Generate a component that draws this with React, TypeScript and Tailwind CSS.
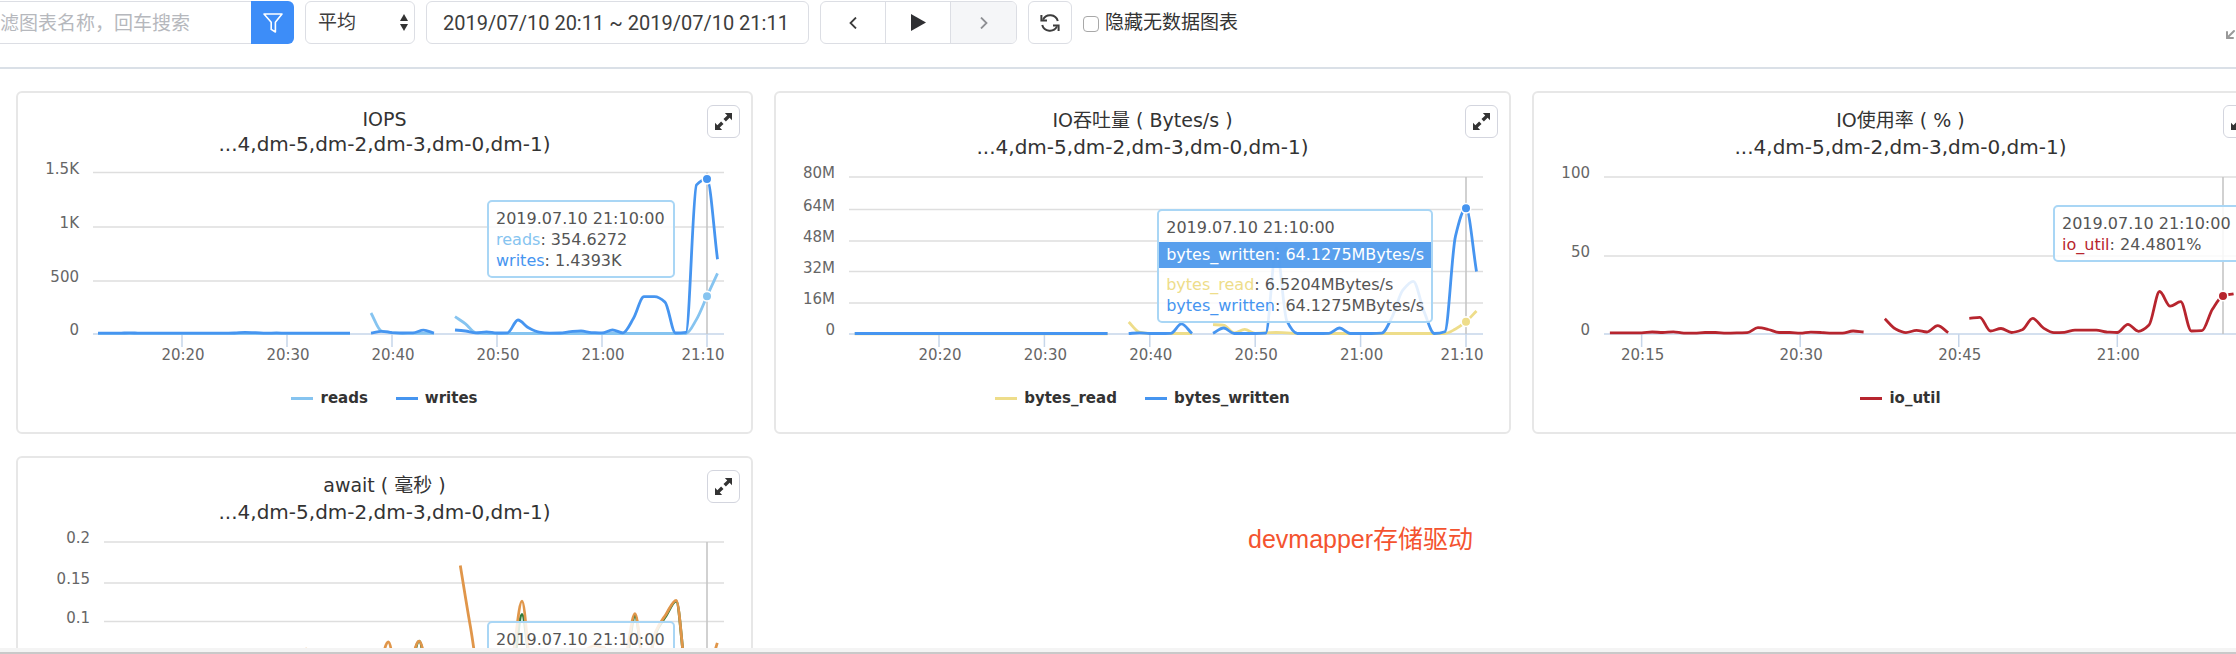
import React from "react";
import { Maximize2 } from "lucide-react";

type Point = [number, number];

interface Series {
  name?: string;
  color: string;
  runs: Point[][];
}

interface Tick {
  label: string;
  y: number;
}

interface ChartProps {
  top: number;
  left: number;
  right: number;
  yTicks: Tick[];
  xTicks: string[];
  max: number;
  originX: number;
  step: number;
  series: Series[];
}

const AXIS_Y = 241;

/* Flat stretch of samples, one per minute. */
const flat = (from: number, to: number, value: number): Point[] =>
  Array.from({ length: to - from + 1 }, (_, i) => [from + i, value] as Point);

/* Monotone cubic path through the points. */
function smooth(points: Point[]): string {
  const n = points.length;
  if (n < 2) return "";
  const slopes = points.slice(1).map((p, i) => (p[1] - points[i][1]) / (p[0] - points[i][0]));
  const tangents = points.map((_, i) => {
    if (i === 0) return slopes[0];
    if (i === n - 1) return slopes[n - 2];
    const a = slopes[i - 1];
    const b = slopes[i];
    return a * b <= 0 ? 0 : (2 * a * b) / (a + b);
  });
  let d = `M${points[0][0].toFixed(1)} ${points[0][1].toFixed(1)}`;
  for (let i = 0; i < n - 1; i++) {
    const [x0, y0] = points[i];
    const [x1, y1] = points[i + 1];
    const h = (x1 - x0) / 3;
    d += `C${(x0 + h).toFixed(1)} ${(y0 + tangents[i] * h).toFixed(1)} ${(x1 - h).toFixed(1)} ${(y1 - tangents[i + 1] * h).toFixed(1)} ${x1.toFixed(1)} ${y1.toFixed(1)}`;
  }
  return d;
}

const toMinute = (label: string) => {
  const [h, m] = label.split(":").map(Number);
  return (h - 20) * 60 + m;
};

function Chart({ top, left, right, yTicks, xTicks, max, originX, step, series }: ChartProps) {
  const plotTop = yTicks[0].y;
  const px = (t: number) => originX + (t - 20) * step;
  const py = (v: number) => AXIS_Y + 0.5 - (v / max) * (AXIS_Y + 0.5 - plotTop);
  return (
    <svg viewBox={`0 ${top} 733 ${278 - top}`} className="block w-full font-['DejaVu_Sans','Noto_Sans_CJK_SC',sans-serif] text-[15px]">
      {yTicks.map((t) => (
        <g key={t.label}>
          <line x1={left} x2={right} y1={t.y} y2={t.y} stroke={t.y === AXIS_Y ? "#c6d6ea" : "#dedede"} strokeWidth={t.y === AXIS_Y ? 1.5 : 1.6} />
          <text x={left - 14} y={t.y + 1} textAnchor="end" fill="#666">
            {t.label}
          </text>
        </g>
      ))}
      {xTicks.map((label) => {
        const x = px(toMinute(label));
        return (
          <g key={label}>
            <line x1={x} x2={x} y1={AXIS_Y} y2={AXIS_Y + 13} stroke="#c6d6ea" strokeWidth={1.5} />
            <text x={Math.min(x + 1, right - 21)} y={267} textAnchor="middle" fill="#666">
              {label}
            </text>
          </g>
        );
      })}
      <line x1={px(70)} x2={px(70)} y1={plotTop} y2={AXIS_Y} stroke="#c6c6c6" strokeWidth={1.6} />
      {series.map((s) =>
        s.runs.map((run, i) => (
          <path
            key={s.color + i}
            d={smooth(run.map(([t, v]) => [px(t), py(v)] as Point))}
            fill="none"
            stroke={s.color}
            strokeWidth={2.8}
            strokeLinejoin="round"
          />
        )),
      )}
      {series.map((s) => {
        const last = s.runs[s.runs.length - 1].find((p) => p[0] === 70);
        return last ? <circle key={s.color} cx={px(70)} cy={py(last[1])} r={4.8} fill={s.color} stroke="#fff" strokeWidth={1.6} /> : null;
      })}
    </svg>
  );
}

function ExpandButton() {
  return (
    <button
      type="button"
      aria-label="放大"
      className="absolute right-[11px] top-3 flex size-[33px] items-center justify-center rounded-md border-[1.5px] border-[#d3d5de] bg-white"
    >
      <svg viewBox="0 0 50 50" className="size-[17px]" fill="#333">
        <path d="M29 0H50V21L43 14L32 25L25 18L36 7Z" />
        <path d="M21 50H0V29L7 36L18 25L25 32L14 43Z" />
      </svg>
    </button>
  );
}

function Tooltip({ className, children }: { className: string; children?: React.ReactNode }) {
  return (
    <div
      className={`absolute min-w-[188px] whitespace-nowrap rounded-[5px] border-2 border-[#a9d6f5] bg-white/85 pt-1.5 pb-[5px] text-base leading-[21px] text-[#555] ${className}`}
    >
      <div className="px-[7px]">2019.07.10 21:10:00</div>
      {children}
    </div>
  );
}

function Row({ name, color, value }: { name: string; color: string; value: string }) {
  return (
    <div className="px-[7px]">
      <span className={color}>{name}</span>: {value}
    </div>
  );
}

interface CardProps {
  title: string;
  compact?: boolean;
  chart: Omit<ChartProps, "top">;
  children: React.ReactNode;
}

function Card({ title, compact, chart, children }: CardProps) {
  return (
    <section className="relative rounded-md border-2 border-[#e7e7e7] bg-white pt-3.5 pb-[22px]">
      <h2 className={`text-center text-[#333] ${compact ? "leading-[25px]" : "leading-[27px]"}`}>
        <span className="block text-[19px]/[inherit]">{title}</span>
        <span className="block text-xl/[inherit]">...4,dm-5,dm-2,dm-3,dm-0,dm-1)</span>
      </h2>
      <ExpandButton />
      <Chart top={compact ? 64 : 68} {...chart} />
      <ul className="mt-[15px] flex h-6 justify-center gap-7 text-[15px] leading-6 font-bold text-[#333]">
        {chart.series
          .filter((s) => s.name)
          .map((s) => (
            <li key={s.color} className="flex items-center gap-[7px]">
              <span className="h-[3px] w-[22px]" style={{ backgroundColor: s.color }} />
              {s.name}
            </li>
          ))}
      </ul>
      {children}
    </section>
  );
}

const tenMinutes = ["20:20", "20:30", "20:40", "20:50", "21:00", "21:10"];

const iops: Omit<ChartProps, "top"> = {
  left: 75,
  right: 706,
  max: 1500,
  originX: 164,
  step: 10.5,
  xTicks: tenMinutes,
  yTicks: [
    { label: "1.5K", y: 79.5 },
    { label: "1K", y: 134 },
    { label: "500", y: 188 },
    { label: "0", y: AXIS_Y },
  ],
  series: [
    {
      name: "reads",
      color: "#86c4f0",
      runs: [
        flat(12, 36, 8),
        [[38, 199], [39, 32], [40, 18], ...flat(41, 44, 10)],
        [[46, 165], [47, 98], [48, 15], ...flat(49, 68, 9), [69, 140], [70, 354.6], [71, 567]],
      ],
    },
    {
      name: "writes",
      color: "#4695f0",
      runs: [
        [...flat(12, 14, 12), [15, 16], ...flat(16, 24, 12), [25, 14], [26, 19], [27, 17], [28, 12], [29, 15], ...flat(30, 36, 12)],
        [[38, 12], [39, 30], [40, 18], [41, 14], [42, 15], [43, 40], [44, 14]],
        [
          [46, 42], [47, 32], [48, 15], [49, 24], [50, 14], [51, 16], [52, 134], [53, 62], [54, 22], [55, 13], [56, 14], [57, 27], [58, 33],
          [59, 18], [60, 15], [61, 42], [62, 16], [63, 150], [64, 350], [65, 350], [66, 300], [67, 14], [68, 20], [69, 1385], [70, 1439.3], [71, 697],
        ],
      ],
    },
  ],
};

const throughput: Omit<ChartProps, "top"> = {
  left: 73,
  right: 707,
  max: 80,
  originX: 163,
  step: 10.54,
  xTicks: tenMinutes,
  yTicks: [
    { label: "80M", y: 84 },
    { label: "64M", y: 116.5 },
    { label: "48M", y: 148 },
    { label: "32M", y: 178.5 },
    { label: "16M", y: 210 },
    { label: "0", y: AXIS_Y },
  ],
  series: [
    {
      name: "bytes_read",
      color: "#eedd8a",
      runs: [
        flat(12, 36, 0.3),
        [[38, 6.3], [39, 1.2], ...flat(40, 44, 0.5)],
        [[46, 5], [47, 4.8], [48, 0.8], [49, 2.6], [50, 0.6], [51, 0.8], [52, 1], [53, 0.8], ...flat(54, 68, 0.5), [69, 2.8], [70, 6.52], [71, 12]],
      ],
    },
    {
      name: "bytes_written",
      color: "#4695f0",
      runs: [
        flat(12, 36, 0.5),
        [[38, 0.5], [39, 0.8], [40, 0.5], [41, 0.5], [42, 0.6], [43, 5.4], [44, 0.5]],
        [
          [46, 0.6], [47, 3.3], [48, 0.5], ...flat(49, 50, 0.5), [51, 0.7], [52, 44], [53, 7], ...flat(54, 56, 0.5), [57, 0.6], [58, 3.3], [59, 0.5],
          ...flat(60, 61, 0.5), [62, 0.7], [63, 9], [64, 22.5], [65, 27], [66, 12], [67, 0.5], [68, 1.4], [69, 50], [70, 64.13], [71, 32],
        ],
      ],
    },
  ],
};

const util: Omit<ChartProps, "top"> = {
  left: 70,
  right: 707,
  max: 100,
  originX: 160.5,
  step: 10.57,
  xTicks: ["20:15", "20:30", "20:45", "21:00"],
  yTicks: [
    { label: "100", y: 84 },
    { label: "50", y: 163 },
    { label: "0", y: AXIS_Y },
  ],
  series: [
    {
      name: "io_util",
      color: "#b7252e",
      runs: [
        [
          ...flat(12, 15, 1), [16, 1.6], [17, 1.3], [18, 1.7], [19, 0.9], [20, 0.9], [21, 1.3], [22, 1.3], [23, 0.9], [24, 1], [25, 1.2], [26, 4.3],
          [27, 3.2], [28, 1.3], [29, 1.3], [30, 0.8], [31, 1.5], [32, 1.3], [33, 0.9], [34, 0.9], [35, 2.2], [36, 1.6],
        ],
        [[38, 10], [39, 3.6], [40, 1.2], [41, 2.6], [42, 1.6], [43, 5.6], [44, 1.2]],
        [
          [46, 10.3], [47, 10.9], [48, 2.2], [49, 3.8], [50, 1.3], [51, 3], [52, 10.3], [53, 4.2], [54, 1.2], [55, 1.4], [56, 2.8], [57, 2.8],
          [58, 2.8], [59, 1.6], [60, 1.3], [61, 6.4], [62, 2], [63, 6], [64, 27.3], [65, 18], [66, 20.8], [67, 2.2], [68, 2.4], [69, 16], [70, 24.48], [71, 25.8],
        ],
      ],
    },
  ],
};

const awaitTime: Omit<ChartProps, "top"> = {
  left: 86,
  right: 706,
  max: 0.2,
  originX: 175,
  step: 10.28,
  xTicks: [],
  yTicks: [
    { label: "0.2", y: 84 },
    { label: "0.15", y: 125 },
    { label: "0.1", y: 163.5 },
  ],
  series: [
    {
      color: "#2c7a3c",
      runs: [
        [[38, 0.01], [39, 0.03], [40, 0.01], [41, 0.03], [42, 0.074], [43, 0.02], [44, 0.02]],
        [[48, 0.02], [51, 0.03], [52, 0.108], [53, 0.03], [55, 0.02], [62, 0.04], [63, 0.106], [64, 0.03], [65, 0.084], [66, 0.106], [67, 0.125], [68, 0.03], [69, 0.01]],
      ],
    },
    {
      color: "#e0964a",
      runs: [
        [[29, 0.01], [30, 0.03], [31, 0.064], [32, 0.03], [33, 0.01]],
        [[38, 0.03], [39, 0.073], [40, 0.02], [41, 0.04], [42, 0.074], [43, 0.03], [44, 0.02]],
        [
          [46, 0.17], [47, 0.091], [48, 0.02], [49, 0.01], [51, 0.05], [52, 0.125], [53, 0.03], [55, 0.02], [57, 0.03], [58, 0.06], [59, 0.068],
          [60, 0.066], [61, 0.03], [62, 0.05], [63, 0.109], [64, 0.03], [65, 0.086], [66, 0.108], [67, 0.126], [68, 0.03], [69, 0.01], [70, 0.03], [71, 0.072],
        ],
      ],
    },
  ],
};

const control = "h-[43px] border-[1.5px] border-[#dcdee4] bg-white text-[#3d3d3d]";

function Toolbar() {
  return (
    <header className="shrink-0 border-b-2 border-[#dae0e7] pt-px pb-[23px] font-[Roboto,'Noto_Sans_CJK_SC',sans-serif] text-[19px]">
      <div className="-mr-3 -ml-9 flex items-center">
        <form className="flex" onSubmit={(e) => e.preventDefault()}>
          <input
            type="text"
            aria-label="过滤图表"
            placeholder="过滤图表名称，回车搜索"
            className={`${control} w-[287px] rounded-l-md border-r-0 pt-0.5 pl-4 placeholder:text-[#b6b8bd]`}
          />
          <button type="submit" aria-label="过滤" className="flex h-[43px] w-[43px] items-center justify-center rounded-r-md bg-[#3d8df8]">
            <svg viewBox="0 0 20 20" className="size-5" fill="none" stroke="#fff" strokeWidth={1.6} strokeLinejoin="round">
              <path d="M1 1H19L12.4 9.2V19L8.2 16.4V9.2Z" />
            </svg>
          </button>
        </form>
        <div className="relative ml-[11px]">
          <select aria-label="聚合方式" className={`${control} w-[110px] appearance-none rounded-md pt-0.5 pl-3`}>
            <option>平均</option>
          </select>
          <svg viewBox="0 0 8 17" className="pointer-events-none absolute top-[13px] right-[7px] h-[17px] w-2" fill="#333">
            <path d="M4 0L8 7H0Z" />
            <path d="M4 17L0 10H8Z" />
          </svg>
        </div>
        <input
          type="text"
          readOnly
          aria-label="时间范围"
          value="2019/07/10 20:11 ~ 2019/07/10 21:11"
          className={`${control} ml-[11px] w-[383px] rounded-md px-4 text-xl`}
        />
        <div className="ml-[11px] flex h-[43px] divide-x-[1.5px] divide-[#dcdee4] overflow-hidden rounded-md border-[1.5px] border-[#dcdee4]">
          <button type="button" aria-label="向前" className="flex w-[65px] items-center justify-center">
            <svg viewBox="0 0 8 12" className="h-3 w-2" fill="none" stroke="#3d3d3d" strokeWidth={1.8}>
              <path d="M7 0.5L1.5 6L7 11.5" />
            </svg>
          </button>
          <button type="button" aria-label="播放" className="flex w-[65px] items-center justify-center">
            <svg viewBox="0 0 15 17" className="h-[17px] w-[15px]" fill="#2f3033">
              <path d="M0 0L15 8.5L0 17Z" />
            </svg>
          </button>
          <button type="button" disabled aria-label="向后" className="flex w-[65px] items-center justify-center bg-[#f5f6f8]">
            <svg viewBox="0 0 8 12" className="h-3 w-2" fill="none" stroke="#8f9195" strokeWidth={1.8}>
              <path d="M1 0.5L6.5 6L1 11.5" />
            </svg>
          </button>
        </div>
        <button type="button" aria-label="刷新" className={`${control} ml-[11px] flex w-[44px] items-center justify-center rounded-md`}>
          <svg viewBox="0 0 20 20" className="size-5" fill="none" stroke="#3d3d3d" strokeWidth={2}>
            <path d="M3 6.6A8 8 0 0 1 17.8 8" />
            <path d="M17 13.4A8 8 0 0 1 2.2 12" />
            <path d="M1.4 2V7.6H7" />
            <path d="M18.6 18V12.4H13" />
          </svg>
        </button>
        <label className="ml-[11px] flex items-center gap-1.5 pt-0.5 text-[#333]">
          <input type="checkbox" className="size-4 appearance-none rounded border-[1.5px] border-[#a8a8a8] bg-white" />
          隐藏无数据图表
        </label>
        <button type="button" aria-label="全屏" className="mt-3 ml-auto text-[#999]">
          <Maximize2 size={24} strokeWidth={2} />
        </button>
      </div>
    </header>
  );
}

export default function App() {
  return (
    <div className="flex h-screen flex-col overflow-hidden bg-white font-['DejaVu_Sans','Noto_Sans_CJK_SC',sans-serif]">
      <Toolbar />
      <main className="min-h-0 grow overflow-hidden pt-[22px] pl-4">
        <div className="-mr-[33px] grid grid-cols-3 items-start gap-x-[21px] gap-y-[22px]">
          <Card title="IOPS" compact chart={iops}>
            <Tooltip className="top-[107px] right-[76px]">
              <Row name="reads" color="text-[#86c4f0]" value="354.6272" />
              <Row name="writes" color="text-[#4695f0]" value="1.4393K" />
            </Tooltip>
          </Card>
          <Card title="IO吞吐量 ( Bytes/s )" chart={throughput}>
            <Tooltip className="top-[116px] right-[76px]">
              <div className="mt-1 mb-1.5 bg-[#4695eb]/90 px-[7px] leading-[26px] text-white">bytes_written: 64.1275MBytes/s</div>
              <Row name="bytes_read" color="text-[#eedd8a]" value="6.5204MBytes/s" />
              <Row name="bytes_written" color="text-[#4695f0]" value="64.1275MBytes/s" />
            </Tooltip>
          </Card>
          <Card title="IO使用率 ( % )" chart={util}>
            <Tooltip className="top-[112px] right-[26px]">
              <Row name="io_util" color="text-[#b7252e]" value="24.4801%" />
            </Tooltip>
          </Card>
          <Card title="await ( 毫秒 )" chart={awaitTime}>
            <Tooltip className="top-[163px] right-[76px] h-[78px]" />
          </Card>
          <p className="pt-[65px] pl-[474px] font-['Liberation_Sans','Noto_Sans_CJK_SC',sans-serif] text-[25px] leading-9 whitespace-nowrap text-[#f4532f]">
            devmapper存储驱动
          </p>
        </div>
      </main>
      <footer className="h-1.5 shrink-0 border-b-2 border-[#c9c9c9] bg-[#f4f4f4]" />
    </div>
  );
}
